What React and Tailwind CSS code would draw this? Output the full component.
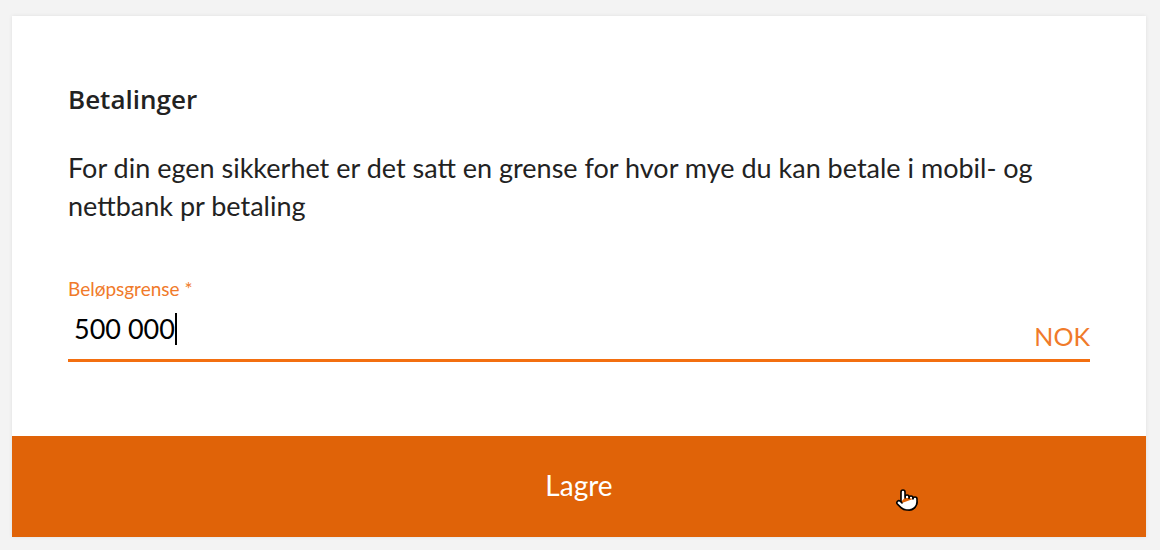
import { Pointer } from "lucide-react";

export default function App() {
  return (
    <div className="min-h-[550px] w-[1160px] bg-[#f3f3f3] pt-4 pl-3 pr-[14px] pb-[13px] font-['Lato','Liberation_Sans',sans-serif]">
      <div className="bg-white shadow-[0_0_4px_rgba(0,0,0,0.08)]">
        <div className="px-14 pt-[68px] pb-[74px]">
          <h1 className="font-['Open_Sans','Lato',sans-serif] text-[26px] font-semibold leading-[30px] text-[#222]">
            Betalinger
          </h1>
          <p className="mt-[35px] text-[27px] leading-[38px] text-[#222] pr-6">
            For din egen sikkerhet er det satt en grense for hvor mye du kan betale i mobil- og nettbank pr betaling
          </p>

          <div className="mt-[52px]">
            <label className="block text-[19px] leading-6 text-[#f07a2a]">Beløpsgrense *</label>
            <div className="mt-[12px] flex items-start border-b-[3px] border-[#f36f10] pb-[12px]">
              <div className="flex flex-1 items-center pl-[6px] text-[27px] leading-8 text-black">
                500 000
                <span className="inline-block h-[32px] w-[2px] bg-black" />
              </div>
              <span className="mt-[12px] text-[25px] leading-[22px] text-[#f07a2a]">NOK</span>
            </div>
          </div>
        </div>

        <button className="relative flex h-[101px] w-full items-center justify-center bg-[#e06308] pb-1 text-[28px] text-white">
          Lagre
          <span className="absolute left-[883px] top-[52px]">
            <Pointer size={24} fill="white" stroke="black" strokeWidth={1.6} />
          </span>
        </button>
      </div>
    </div>
  );
}
